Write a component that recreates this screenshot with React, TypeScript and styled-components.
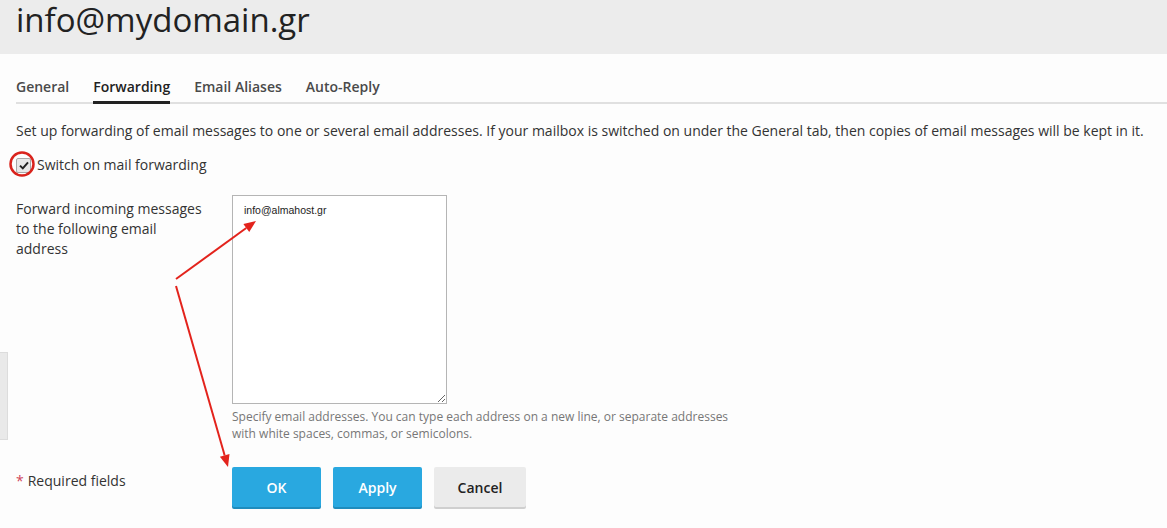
import React from "react";
import styled, { createGlobalStyle } from "styled-components";

const GlobalStyle = createGlobalStyle`
  html, body {
    margin: 0;
    padding: 0;
    background: #fff;
  }
  body {
    font-family: "Open Sans", "Noto Sans", sans-serif;
    color: #333;
  }
`;

const Page = styled.div`
  position: relative;
  width: 1167px;
  height: 528px;
  overflow: hidden;
  background: #fdfdfd;
`;

const Header = styled.header`
  height: 54px;
  background: #ececec;
  padding-left: 16px;
  display: flex;
  align-items: flex-start;
`;

const Title = styled.h1`
  margin: 0;
  font-size: 33px;
  font-weight: 400;
  color: #222;
  line-height: 40px;
`;

const Body = styled.main`
  padding: 0 0 0 16px;
`;

const Tabs = styled.nav`
  display: flex;
  gap: 24px;
  margin-top: 23px;
  border-bottom: 2px solid #e0e0e0;
`;

const Tab = styled.span<{ $active?: boolean }>`
  font-size: 14px;
  font-weight: 600;
  line-height: 20px;
  padding-bottom: 4px;
  margin-bottom: -2px;
  color: ${(p) => (p.$active ? "#222" : "#4a4a4a")};
  border-bottom: 3px solid ${(p) => (p.$active ? "#222" : "transparent")};
`;

const Intro = styled.p`
  margin: 17px 0 0;
  font-size: 14px;
  line-height: 20px;
  color: #333;
`;

const CheckRow = styled.label`
  display: flex;
  align-items: center;
  gap: 6px;
  margin-top: 14px;
  font-size: 14px;
  line-height: 20px;
  color: #333;
`;

const CheckBox = styled.span`
  width: 13px;
  height: 13px;
  border: 1px solid #a8a8a8;
  border-radius: 2px;
  background: #e8e8e8;
  display: flex;
  align-items: center;
  justify-content: center;
`;

const FormRow = styled.div`
  display: grid;
  grid-template-columns: 216px auto;
  margin-top: 20px;
`;

const Label = styled.div`
  font-size: 14px;
  line-height: 20px;
  padding-top: 4px;
  padding-right: 28px;
  color: #333;
`;

const Field = styled.div`
  display: flex;
  flex-direction: column;
`;

const TextArea = styled.textarea`
  width: 215px;
  height: 209px;
  box-sizing: border-box;
  border: 1px solid #b5b5b5;
  border-radius: 0;
  padding: 8px 11px;
  font-family: "Liberation Sans", Arial, sans-serif;
  font-size: 10.5px;
  color: #222;
  background: #fff;
  resize: both;
  outline: none;
`;

const Hint = styled.div`
  margin-top: 4px;
  width: 500px;
  font-size: 12px;
  line-height: 17px;
  color: #777;
`;

const Footer = styled.div`
  display: grid;
  grid-template-columns: 216px auto;
  align-items: center;
  margin-top: 25px;
`;

const Required = styled.span`
  font-size: 14px;
  color: #333;
  margin-top: -14px;
`;

const Star = styled.span`
  color: #d0455a;
  margin-right: 4px;
`;

const Buttons = styled.div`
  display: flex;
  gap: 12px;
`;

const Button = styled.button<{ $primary?: boolean; $w: number }>`
  width: ${(p) => p.$w}px;
  height: 40px;
  border: none;
  border-radius: 2px;
  font-family: "Open Sans", sans-serif;
  font-size: 14px;
  font-weight: 600;
  cursor: pointer;
  color: ${(p) => (p.$primary ? "#fff" : "#222")};
  background: ${(p) => (p.$primary ? "#29a8e0" : "#ebebeb")};
  box-shadow: 0 2px 0 ${(p) => (p.$primary ? "#1f8cbd" : "#cfcfcf")};
`;

const SideHandle = styled.div`
  position: absolute;
  left: 0;
  top: 352px;
  width: 8px;
  height: 88px;
  background: #e9e9e9;
  border: 1px solid #dcdcdc;
  border-left: none;
  box-sizing: border-box;
`;

const Annotations = styled.svg`
  position: absolute;
  left: 0;
  top: 0;
  pointer-events: none;
`;

const Arrow = ({ x1, y1, x2, y2 }: { x1: number; y1: number; x2: number; y2: number }) => {
  const a = Math.atan2(y2 - y1, x2 - x1);
  const len = 12;
  const w = 5;
  const bx = x2 - len * Math.cos(a);
  const by = y2 - len * Math.sin(a);
  const px = -Math.sin(a) * w;
  const py = Math.cos(a) * w;
  return (
    <g>
      <line x1={x1} y1={y1} x2={bx} y2={by} stroke="#e3231c" strokeWidth={2} />
      <polygon points={`${x2},${y2} ${bx + px},${by + py} ${bx - px},${by - py}`} fill="#e3231c" />
    </g>
  );
};

export default function App() {
  return (
    <Page>
      <GlobalStyle />
      <Header>
        <Title>info@mydomain.gr</Title>
      </Header>
      <Body>
        <Tabs>
          <Tab>General</Tab>
          <Tab $active>Forwarding</Tab>
          <Tab>Email Aliases</Tab>
          <Tab>Auto-Reply</Tab>
        </Tabs>
        <Intro>
          Set up forwarding of email messages to one or several email addresses. If your mailbox is
          switched on under the General tab, then copies of email messages will be kept in it.
        </Intro>
        <CheckRow>
          <CheckBox>
            <svg width="10" height="9" viewBox="0 0 10 9">
              <path d="M1 4.6 L3.8 7.4 L9 1.4" fill="none" stroke="#222" strokeWidth="2" />
            </svg>
          </CheckBox>
          Switch on mail forwarding
        </CheckRow>
        <FormRow>
          <Label>Forward incoming messages to the following email address</Label>
          <Field>
            <TextArea defaultValue="info@almahost.gr" />
            <Hint>
              Specify email addresses. You can type each address on a new line, or separate addresses
              with white spaces, commas, or semicolons.
            </Hint>
          </Field>
        </FormRow>
        <Footer>
          <Required>
            <Star>*</Star>Required fields
          </Required>
          <Buttons>
            <Button $primary $w={89}>OK</Button>
            <Button $primary $w={89}>Apply</Button>
            <Button $w={92}>Cancel</Button>
          </Buttons>
        </Footer>
      </Body>
      <SideHandle />
      <Annotations width={1167} height={528}>
        <circle cx={22} cy={164} r={11.5} fill="none" stroke="#d9231c" strokeWidth={2.5} />
        <Arrow x1={176} y1={279} x2={256} y2={221} />
        <Arrow x1={176} y1={286} x2={228} y2={467} />
      </Annotations>
    </Page>
  );
}
